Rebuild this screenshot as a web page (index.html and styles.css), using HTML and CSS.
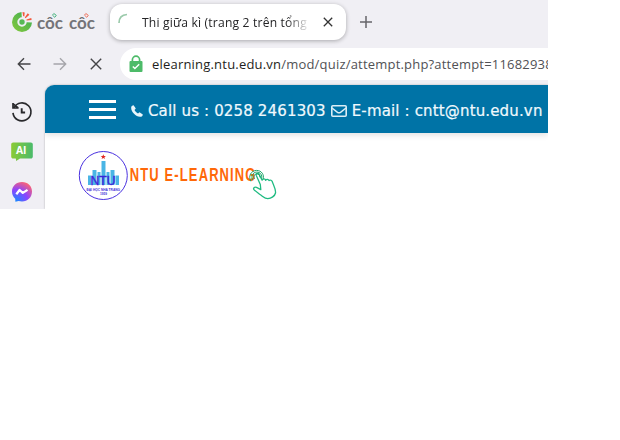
FILE: index.html
```html
<!DOCTYPE html>
<html lang="vi">
<head>
<meta charset="utf-8">
<title>NTU E-Learning</title>
<link rel="stylesheet" href="styles.css">
</head>
<body>
<div class="browser">
  <div class="tabstrip">
    <div class="brand">
      <svg class="brand-mark" width="22" height="22" viewBox="0 0 22 22">
        <defs><linearGradient id="leaf" x1="0" y1="1" x2="1" y2="0"><stop offset="0" stop-color="#87c93c"/><stop offset="1" stop-color="#3aac56"/></linearGradient></defs>
        <path d="M10.500 1A10 10 0 1 0 21 11.400L11 11z" fill="url(#leaf)"/>
        <circle cx="11" cy="11" r="3.700" fill="#58b956" stroke="#f0eff4" stroke-width="2"/>
        <path d="M11.500 1l2.200.5-.4 4-1.200-.4zM16.700 2.300l1.700 1.500-3.800 3.400-.8-.8zM20.300 7l.3 2.100-5 .5-.1-1.100z" fill="#f4573b"/>
      </svg>
      <svg class="brand-name" width="61" height="24" viewBox="0 0 61 24">
        <text x="1" y="18" textLength="26" lengthAdjust="spacingAndGlyphs">côc</text>
        <text x="33" y="18" textLength="26" lengthAdjust="spacingAndGlyphs">côc</text>
        <path d="M16.500 4.200l1.300-1.700 2.500 1.800-1.500 2z" fill="none" stroke="#4ab581"/>
        <path d="M48.500 4.200l1.300-1.700 2.500 1.800-1.500 2z" fill="none" stroke="#ef745f"/>
      </svg>
    </div>
    <div class="tab">
      <svg class="spinner" width="12" height="12" viewBox="0 0 12 12"><path d="M1 10Q1 2 9 1.500" fill="none" stroke="#9bcaab" stroke-width="1.700"/></svg>
      <span class="tab-title">Thi giữa kì (trang 2 trên tổng</span>
      <svg class="tab-close" width="10" height="10" viewBox="0 0 10 10"><path d="M.8.8l8.400 8.400M9.200.8L.8 9.200" stroke="#333" stroke-width="1.300"/></svg>
    </div>
    <svg class="new-tab" width="12" height="12" viewBox="0 0 12 12"><path d="M6 0v12M0 6h12" stroke="#66666a" stroke-width="1.500"/></svg>
  </div>
  <div class="toolbar">
    <svg class="nav" width="14" height="14" viewBox="0 0 14 14"><path d="M13.500 7H1.400M7 1.300L1.300 7 7 12.700" fill="none" stroke="#444447" stroke-width="1.400"/></svg>
    <svg class="nav" width="14" height="14" viewBox="0 0 14 14"><path d="M.5 7h12.100M7 1.300L12.700 7 7 12.700" fill="none" stroke="#a5a5aa" stroke-width="1.400"/></svg>
    <svg class="nav" width="14" height="14" viewBox="0 0 14 14"><path d="M1.800 1.800l10.400 10.400M12.200 1.800L1.800 12.200" stroke="#444447" stroke-width="1.400"/></svg>
    <div class="omnibox">
      <svg class="lock" width="14" height="18" viewBox="0 0 14 18">
        <path d="M3.400 8V4.800a3.600 3.600 0 0 1 7.200 0V8" fill="none" stroke="#4dbb69" stroke-width="1.700"/>
        <rect x=".5" y="6" width="13" height="11" rx="1" fill="#4dbb69"/>
        <path d="M3.800 11.400l2.100 2.200 4.300-4.300" fill="none" stroke="#fff" stroke-width="1.400"/>
      </svg>
      <span class="url"><span class="host">elearning.ntu.edu.vn</span>/mod/quiz/attempt.php?attempt=11682938</span>
    </div>
  </div>
  <div class="main">
    <div class="sidebar">
      <svg width="22" height="22" viewBox="0 0 22 22"><path d="M3 6.700A9 9 0 1 1 2 11.800M2 2v5h5.600M2.200 2.800l5 4" fill="none" stroke="#29292c" stroke-width="1.700"/><path d="M10.700 7.200v4.300h3.400" fill="none" stroke="#29292c" stroke-width="1.900"/></svg>
      <svg width="22" height="20" viewBox="0 0 22 20">
        <defs><linearGradient id="ai"><stop offset="0" stop-color="#8bcb35"/><stop offset="1" stop-color="#4aba6b"/></linearGradient></defs>
        <path d="M2.500.5h17a2 2 0 0 1 2.300 2.300v11.400a2 2 0 0 1-2.300 2.300H9L5.200 19l-.4-2.500H2.500A2 2 0 0 1 .2 14.200V2.800A2 2 0 0 1 2.500.5Z" fill="url(#ai)"/>
        <text class="ai-label" x="5" y="12.200" textLength="10.500" lengthAdjust="spacingAndGlyphs">AI</text>
      </svg>
      <svg width="22" height="22" viewBox="0 0 22 22">
        <defs><radialGradient id="msg" cx=".2" cy="1" r="1.100"><stop offset="0" stop-color="#168bff"/><stop offset=".55" stop-color="#8b45ff"/><stop offset="1" stop-color="#ff6470"/></radialGradient></defs>
        <path d="M11 1C5.200 1 1 5.100 1 10.600c0 3 1.200 5.500 3.200 7.200l.2 3L7.600 20c1 .3 2.200.5 3.400.5 5.800 0 10-4.200 10-9.900S16.800 1 11 1Z" fill="url(#msg)"/>
        <path d="M5.300 13.300l3.300-4.300 3.200 2.900 4.700-3" fill="none" stroke="#fff" stroke-width="2.300" stroke-linejoin="round"/>
      </svg>
    </div>
    <div class="page">
      <div class="topbar">
        <div class="menu"><i></i><i></i><i></i></div>
        <svg class="phone" width="12" height="12" viewBox="0 0 12 12"><path d="M.3 2C.5.900 1.600.2 2.600.2L4.800 3.500 3.500 5c.8 1.500 2 2.700 3.500 3.500l1.500-1.300L11.800 9.400c0 1-.7 2-1.800 2.300C5.500 12.800-.8 6.500.3 2Z" fill="#e8f5fb"/></svg>
        <span class="call">Call us : 0258 2461303</span>
        <svg class="mail" width="16" height="12" viewBox="0 0 16 12"><rect x=".8" y=".8" width="14.400" height="10.400" rx="1" fill="none" stroke="#dceef6" stroke-width="1.600"/><path d="M1 3l5.500 4.300q1.500 1 3 0L15 3" fill="none" stroke="#dceef6" stroke-width="1.500"/></svg>
        <span class="email">E-mail : cntt@ntu.edu.vn</span>
      </div>
      <svg class="site-logo" width="200" height="54" viewBox="78 149 200 54">
        <circle cx="103.300" cy="175.500" r="24" fill="#fff" stroke="#4a32e0"/>
        <path d="M88 185v-9.500h3.500V185zM92.500 185v-15h4v15zM97.500 185v-13h3v13zM101.500 185v-24h4v24zM106.500 185v-13h3v13zM110.500 185v-15h4v15zM115.500 185v-9.500h3.500V185z" fill="#4ab5e5"/>
        <path d="M103.300 154.300l.7 1.700h1.900l-1.500 1.200.6 1.900-1.700-1.100-1.700 1.100.6-1.900-1.500-1.200h1.900z" fill="#e22922"/>
        <text class="logo-ntu" x="90.500" y="185" textLength="25" lengthAdjust="spacingAndGlyphs">NTU</text>
        <text class="logo-small" x="86.500" y="190.500" textLength="33.500" lengthAdjust="spacingAndGlyphs">ĐẠI HỌC NHA TRANG</text>
        <text class="logo-small" x="100" y="194.800" textLength="7" lengthAdjust="spacingAndGlyphs">1959</text>
        <text class="wordmark" transform="translate(129.800 180.800) scale(.72 1)" textLength="174.500" lengthAdjust="spacing">NTU E-LEARNING</text>
        <path d="M260.300 184.500l-4-9c-.7-2 1.800-3 2.800-1.200l3 5.800c1-1.700 3-1.500 3.500.2 1-1.300 2.800-1 3.400.3 1.300-1 3-.3 3.300 1.200 1.500 4 3.800 7.800 3.200 11.200-.6 3-4.300 5.400-7.700 5.700-3.300 0-5-2.500-8.200-4.400l-5.400-4.400c-1.600-1.600.4-3.400 2.300-2.500l4.300 2.200z" fill="#fff" stroke="#20bb82" stroke-width="1.300" stroke-linejoin="round"/>
        <path d="M252.800 180.300c-2.200-3.600-.2-8 3.800-8.200 3.600-.2 5.900 3 5 6.500M250.800 181.300c-2.800-5 .1-10.700 5.700-10.900 5 0 8 4.300 6.600 8.900M254.600 179c-1.400-2.200-.4-4.900 2-5.100 2.100-.2 3.500 1.600 3.300 3.500" fill="none" stroke="#20a66b" stroke-width="1"/>
      </svg>
    </div>
  </div>
</div>
</body>
</html>
```
FILE: styles.css
```css
* { box-sizing: border-box; }
body { margin: 0; background: #fff; font-family: "Open Sans", "Noto Sans", sans-serif; }
svg { display: block; flex: none; }
.browser { width: 548px; height: 209px; overflow: hidden; background: #f0eff4; display: flex; flex-direction: column; }
.tabstrip { height: 48px; flex: none; display: flex; align-items: flex-start; }
.brand { width: 110px; padding: 11px 0 0 11px; display: flex; flex: none; }
.brand-name { margin-left: 3px; }
.brand-name text { font: 700 17px Lato, sans-serif; fill: #747478; }
.tab { width: 236px; height: 36px; margin-top: 4px; padding: 0 13px 0 8px; border-radius: 12px; background: #fff; box-shadow: 0 1px 4px #0000004d; display: flex; align-items: center; }
.spinner { margin-top: -7px; }
.tab-title { width: 168px; margin-left: 12px; font-size: 12.1px; letter-spacing: .19px; color: #242426; white-space: nowrap; overflow: hidden; mask-image: linear-gradient(90deg, #000 86%, transparent); }
.tab-close { margin-left: auto; }
.new-tab { margin: 16px 0 0 14px; }
.toolbar { height: 37px; flex: none; padding-left: 17px; display: flex; align-items: flex-start; }
.nav { margin: 9px 22px 0 0; }
.nav:nth-child(3) { margin-right: 17px; }
.omnibox { flex: 1; min-width: 0; height: 32px; padding-left: 9px; background: #fff; border-radius: 16px 0 0 16px; display: flex; align-items: center; overflow: hidden; }
.url { margin-left: 9px; font-size: 13px; letter-spacing: .2px; white-space: nowrap; color: #515155; }
.host { color: #1e1e20; }
.main { height: 124px; display: flex; }
.sidebar { width: 45px; padding: 16px 0 0 11px; display: flex; flex-direction: column; gap: 19px; flex: none; }
.ai-label { font: 700 10px "Open Sans", sans-serif; fill: #fff; }
.page { flex: 1; background: #fff; border-top-left-radius: 9px; overflow: hidden; box-shadow: 0 0 2px #00000050; }
.topbar { height: 48px; padding-left: 44px; display: flex; align-items: center; background: #0073a6; box-shadow: 0 2px 6px #00000020; color: #f0f9fd; font: 15px "DejaVu Sans", sans-serif; letter-spacing: .15px; white-space: nowrap; -webkit-text-stroke: .2px #f0f9fd; }
.menu { width: 27px; height: 19px; display: flex; flex-direction: column; justify-content: space-between; margin-right: 15px; }
.menu i { height: 3px; background: #fff; }
.phone { margin-top: 3px; }
.call { margin: 4px 5px 0; }
.mail { margin-top: 4px; }
.email { margin: 4px 0 0 5px; }
.site-logo { margin: 16px 0 0 33px; }
.logo-ntu { font: 400 13px "Liberation Sans", sans-serif; fill: #3c24d8; stroke: #3c24d8; stroke-width: .4px; }
.logo-small { font: 700 4px "Liberation Sans", sans-serif; fill: #4330d8; }
.wordmark { font: 700 18px "Liberation Sans", sans-serif; fill: #ff6808; }
```
